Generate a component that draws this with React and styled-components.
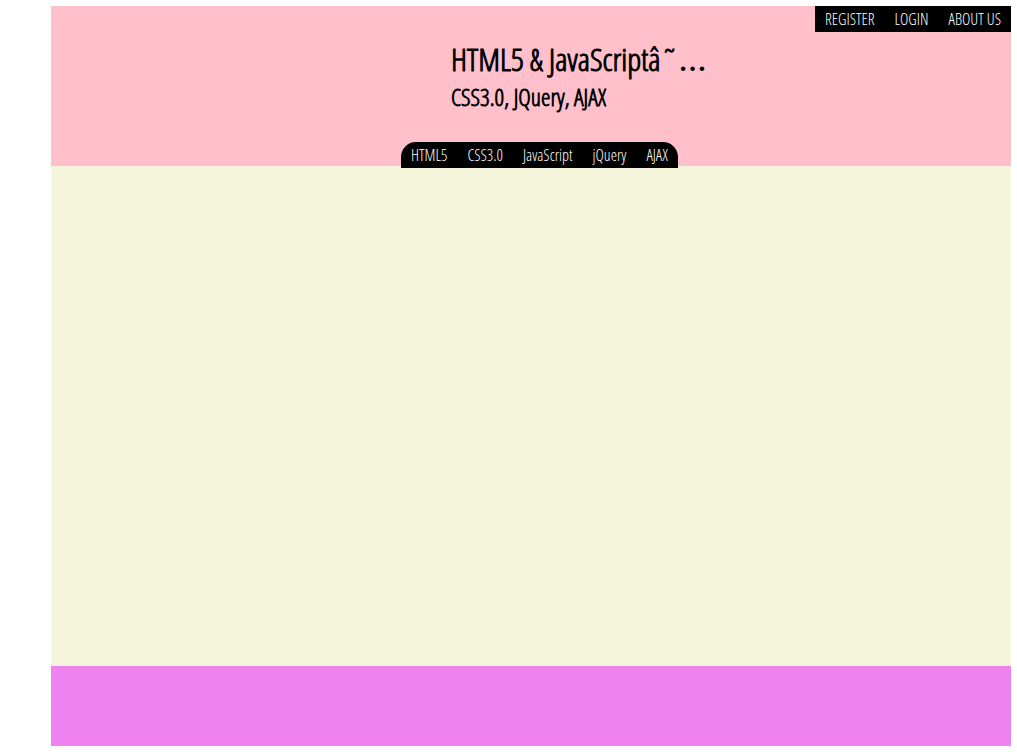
import React from "react";
import styled, { createGlobalStyle } from "styled-components";

const GlobalStyle = createGlobalStyle`
  * { box-sizing: border-box; }
  body {
    margin: 0;
    background: #fff;
    color: #000;
    font-family: "Open Sans Condensed Light", "Open Sans Condensed", "Open Sans", sans-serif;
    font-weight: 300;
    font-kerning: none;
  }
`;

const Page = styled.div`
  margin: 6px 6px 6px 51px;
`;

const Header = styled.header`
  display: flex;
  flex-direction: column;
  height: 160px;
  background: pink;
`;

const Menu = styled.nav`
  display: flex;
  width: max-content;
  height: 26px;
  flex-shrink: 0;
  padding: 0 10px;
  gap: 20px;
  background: #000;
`;

const AccountMenu = styled(Menu)`
  align-self: flex-end;
`;

const TopicMenu = styled(Menu)`
  margin-top: 30px;
  margin-left: 350px;
  border-radius: 15px 15px 0 0;
`;

const MenuLink = styled.a`
  color: #fff;
  font-size: 16px;
  line-height: 26px;
  text-decoration: none;
  white-space: nowrap;
`;

const Branding = styled.div`
  margin: 4px 0 0 400px;
  white-space: nowrap;
`;

const Title = styled.h1`
  margin: 0;
  height: 46px;
  font-size: 32px;
  font-weight: bold;
  line-height: 46px;
`;

const Ellipsis = styled.span`
  font-family: "Liberation Serif", serif;
  font-size: 28px;
  line-height: 1;
`;

const Subtitle = styled.h2`
  margin: 0;
  font-size: 24px;
  font-weight: bold;
  line-height: 30px;
`;

const Content = styled.main`
  height: 500px;
  background: beige;
`;

const Footer = styled.footer`
  height: 80px;
  background: violet;
`;

const account = ["REGISTER", "LOGIN", "ABOUT US"];
const topics = ["HTML5", "CSS3.0", "JavaScript", "jQuery", "AJAX"];

export default function App() {
  return (
    <>
      <GlobalStyle />
      <Page>
        <Header>
          <AccountMenu aria-label="Account">
            {account.map((t) => <MenuLink key={t} href="#">{t}</MenuLink>)}
          </AccountMenu>
          <Branding>
            <Title>HTML5 &amp; JavaScriptâ˜<Ellipsis>…</Ellipsis></Title>
            <Subtitle>CSS3.0, JQuery, AJAX</Subtitle>
          </Branding>
          <TopicMenu aria-label="Topics">
            {topics.map((t) => <MenuLink key={t} href="#">{t}</MenuLink>)}
          </TopicMenu>
        </Header>
        <Content />
        <Footer />
      </Page>
    </>
  );
}
